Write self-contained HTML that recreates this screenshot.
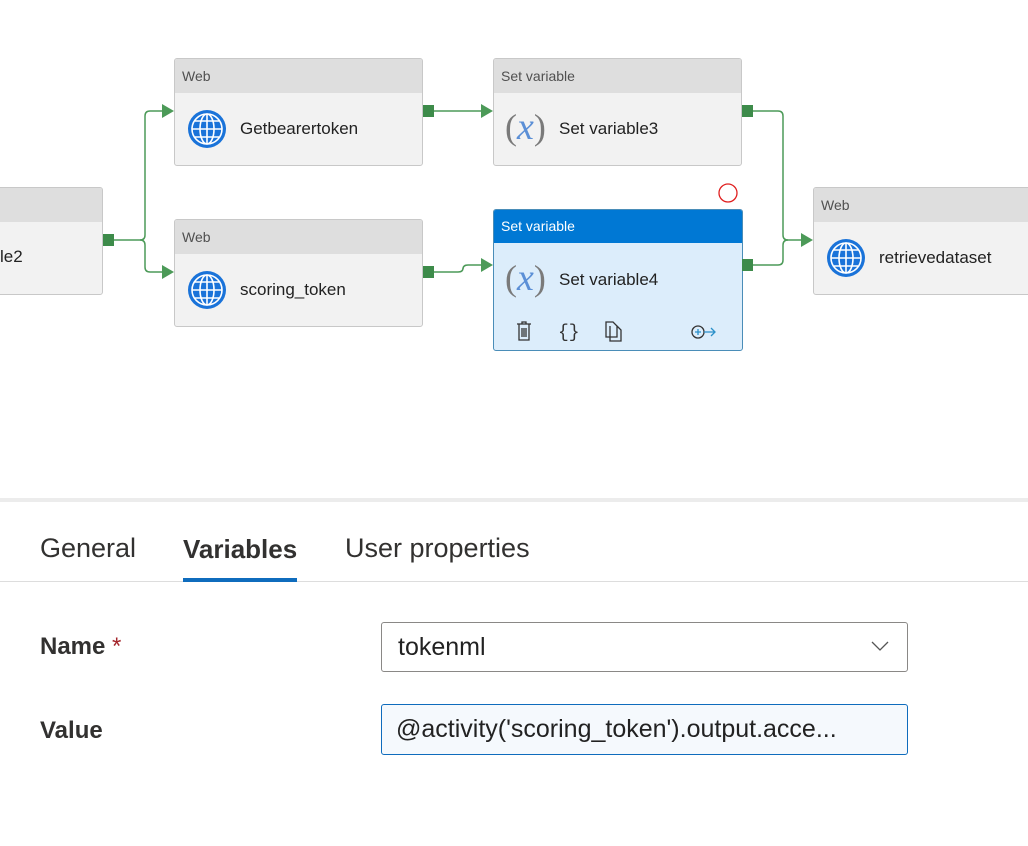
<!DOCTYPE html>
<html><head><meta charset="utf-8"><style>
*{margin:0;padding:0;box-sizing:border-box}
body{width:1028px;height:846px;background:#fff;position:relative;overflow:hidden;font-family:"Segoe UI","Liberation Sans",sans-serif;color:#323130}
.node{position:absolute;background:#f2f2f2;border:1px solid #c8c8c8;border-radius:3px;overflow:hidden}
.node .hd{height:34px;background:#dedede;font-size:14px;color:#505050;padding:9px 0 0 7px}
.node .nm{position:absolute;left:65px;font-size:17px;color:#222}
.sel{border:1px solid #4a8db8;background:#dcedfb}
.sel .hd{background:#0078d4;color:#fff;height:33px;padding-top:8px}
.port{position:absolute;width:11px;height:12px;background:#3d8b4a}
.glob{position:absolute;left:12px;width:40px;height:40px}
.fx{position:absolute;left:11px;font-family:"Liberation Serif",serif;font-size:36px;color:#7a7a7a}
.fx i{color:#5b8fd6;font-size:38px}
.tab{position:absolute;top:533px;font-size:27px;color:#323130}
.lbl{position:absolute;left:40px;font-size:24px;font-weight:bold;color:#323130}
.inp{position:absolute;left:381px;width:527px;border-radius:3px;font-size:25px;padding:10px 0 0 16px;color:#222}
</style></head><body>
<svg width="1028" height="360" style="position:absolute;left:0;top:0" fill="none" stroke="#4c9a58" stroke-width="1.5">
<path d="M114 240 H140 Q145 240 145 235 V116 Q145 111 150 111 H162"/>
<path d="M140 240 Q145 240 145 245 V267 Q145 272 150 272 H162"/>
<path d="M434 111 H481"/>
<path d="M434 272 H458 Q463 272 463 268 V269 Q463 265 468 265 H481"/>
<path d="M753 111 H778 Q783 111 783 116 V235 Q783 240 788 240 H801"/>
<path d="M753 265 H778 Q783 265 783 260 V245 Q783 240 788 240"/>
<g fill="#4c9a58" stroke="none">
<path d="M162 104 L174 111 L162 118Z"/><path d="M162 265 L174 272 L162 279Z"/>
<path d="M481 104 L493 111 L481 118Z"/><path d="M481 258 L493 265 L481 272Z"/>
<path d="M801 233 L813 240 L801 247Z"/>
</g>
<circle cx="728" cy="193" r="9" stroke="#e02020" stroke-width="1.3"/>
</svg>

<div class="node" style="left:-20px;top:187px;width:123px;height:108px"><div class="hd"></div><div class="nm" style="left:19px;top:59px">le2</div></div>
<div class="port" style="left:103px;top:234px"></div>

<div class="node" style="left:174px;top:58px;width:249px;height:108px"><div class="hd">Web</div>
<svg class="glob" style="top:50px" viewBox="0 0 40 40"><circle cx="20" cy="20" r="19" fill="#1a73d9"/><g fill="none" stroke="#fff" stroke-width="1.6"><circle cx="20" cy="20" r="15"/><ellipse cx="20" cy="20" rx="7" ry="15"/><path d="M20 5V35M5 20H35M8 12H32M8 28H32"/></g></svg>
<div class="nm" style="top:60px">Getbearertoken</div></div>
<div class="port" style="left:423px;top:105px"></div>

<div class="node" style="left:174px;top:219px;width:249px;height:108px"><div class="hd">Web</div>
<svg class="glob" style="top:50px" viewBox="0 0 40 40"><circle cx="20" cy="20" r="19" fill="#1a73d9"/><g fill="none" stroke="#fff" stroke-width="1.6"><circle cx="20" cy="20" r="15"/><ellipse cx="20" cy="20" rx="7" ry="15"/><path d="M20 5V35M5 20H35M8 12H32M8 28H32"/></g></svg>
<div class="nm" style="top:60px">scoring_token</div></div>
<div class="port" style="left:423px;top:266px"></div>

<div class="node" style="left:493px;top:58px;width:249px;height:108px"><div class="hd">Set variable</div>
<div class="fx" style="top:46px">(<i>x</i>)</div>
<div class="nm" style="top:60px">Set variable3</div></div>
<div class="port" style="left:742px;top:105px"></div>

<div class="node sel" style="left:493px;top:209px;width:250px;height:142px"><div class="hd">Set variable</div>
<div class="fx" style="top:46px">(<i>x</i>)</div>
<div class="nm" style="top:60px">Set variable4</div>
<svg style="position:absolute;left:20px;top:110px" width="210" height="24" fill="none" stroke="#333" stroke-width="1.3">
<path d="M3 4H17M8 4V2H12V4M5 4V20H15V4M8 8V17M10 8V17M12 8V17"/>
<text x="44" y="17" font-size="18" fill="#333" stroke="none" font-family="Liberation Mono,monospace">{}</text>
<path d="M92 2H99L103 6V17H92ZM96 6V21H107V10L103 6"/>
<circle cx="184" cy="12" r="6"/><path d="M181 12H187M184 9V15M190 12H201M197 8L201 12L197 16" stroke="#2a90c9"/>
</svg></div>
<div class="port" style="left:742px;top:259px"></div>

<div class="node" style="left:813px;top:187px;width:230px;height:108px"><div class="hd">Web</div>
<svg class="glob" style="top:50px" viewBox="0 0 40 40"><circle cx="20" cy="20" r="19" fill="#1a73d9"/><g fill="none" stroke="#fff" stroke-width="1.6"><circle cx="20" cy="20" r="15"/><ellipse cx="20" cy="20" rx="7" ry="15"/><path d="M20 5V35M5 20H35M8 12H32M8 28H32"/></g></svg>
<div class="nm" style="top:60px">retrievedataset</div></div>

<div style="position:absolute;left:0;top:498px;width:1028px;height:4px;background:#ececec"></div>
<div class="tab" style="left:40px">General</div>
<div class="tab" style="left:183px;font-weight:bold;font-size:26px;top:534px">Variables</div>
<div class="tab" style="left:345px">User properties</div>
<div style="position:absolute;left:0;top:581px;width:1028px;height:1px;background:#ddd"></div>
<div style="position:absolute;left:183px;top:578px;width:114px;height:4px;background:#0f6cbd"></div>

<div class="lbl" style="top:633px">Name <span style="color:#a4262c;font-weight:normal">*</span></div>
<div class="lbl" style="top:717px">Value</div>
<div class="inp" style="top:622px;height:50px;border:1px solid #8a8886">tokenml
<svg style="position:absolute;right:18px;top:17px" width="18" height="12" fill="none" stroke="#555" stroke-width="1.3"><path d="M1 2L9 10L17 2"/></svg></div>
<div class="inp" style="top:704px;height:51px;border:1.5px solid #0f6cbd;background:#f5f9fd;padding-left:14px">@activity('scoring_token').output.acce...</div>
</body></html>
